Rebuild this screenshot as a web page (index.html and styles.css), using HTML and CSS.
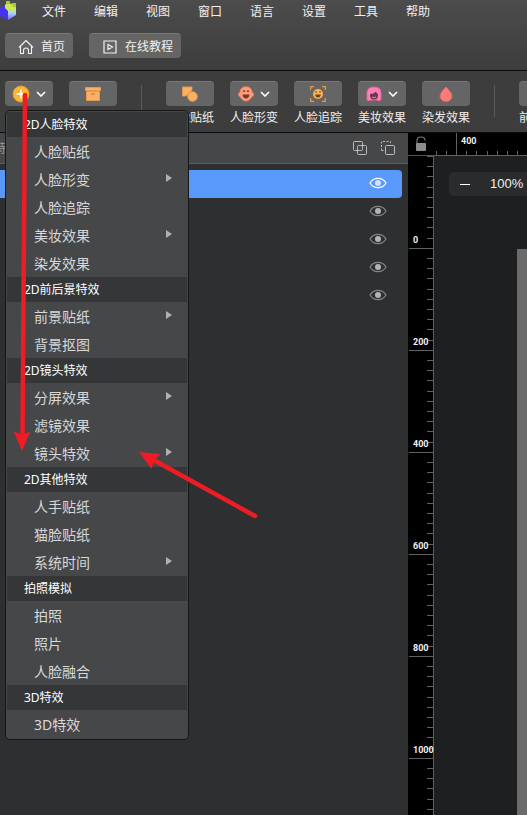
FILE: index.html
```html
<!DOCTYPE html>
<html lang="zh-CN">
<head>
<meta charset="utf-8">
<title>特效编辑器</title>
<link rel="stylesheet" href="styles.css">
</head>
<body>
<svg class="defs" aria-hidden="true">
  <symbol id="eye" viewBox="0 0 18 12"><path d="M1 6C4.500-.2 13.500-.2 17 6C13.500 12.200 4.500 12.200 1 6Z" fill="none" stroke="currentColor" stroke-width="1.200"/><circle class="iris" cx="9" cy="6" r="3"/></symbol>
  <symbol id="chev" viewBox="0 0 10 6"><path d="M1 1l4 4 4-4" fill="none" stroke="#fff" stroke-width="1.600"/></symbol>
  <symbol id="ticks" viewBox="0 0 25 102"><path d="M19 9.500h6M19 19.500h6M19 29.500h6M19 40.500h6M19 50.500h6M19 60.500h6M19 70.500h6M19 80.500h6M19 91.500h6M1 101.500h24" stroke="#606060"/></symbol>
</svg>
<div class="app">
  <header class="top">
    <nav class="menubar" aria-label="主菜单">
      <svg class="logo" viewBox="0 0 18 20"><path d="M0 6L5 5L8 9L16 5V14L8 19L0 15Z" fill="#4634f5"/><path d="M8 9L16 5V14L8 19Z" fill="url(#lg)"/><path d="M5 4L8 1L11 3L13 2L16 4V7L12 10L10 8L8 10L5 7Z" fill="#cfe84a"/><path d="M6 0h4v3H6ZM12 2h4v4h-3Z" fill="#a9c43a"/><defs><linearGradient id="lg" x1="0" y1="0" x2="0" y2="1"><stop offset="0" stop-color="#d3ef8a"/><stop offset=".5" stop-color="#b4d3e8"/><stop offset="1" stop-color="#6d6cff"/></linearGradient></defs></svg>
      <button>文件</button><button>编辑</button><button>视图</button><button>窗口</button><button>语言</button><button>设置</button><button>工具</button><button>帮助</button>
    </nav>
    <div class="quick">
      <button class="btn"><svg width="16" height="16" viewBox="0 0 16 16" fill="none" stroke="#f2f2f2" stroke-width="1.100"><path d="M1 8.500L8 1.500L15 8.500M2.500 7.500V14.500H5.500V11.500Q5.500 9 8 9T10.500 11.500V14.500H13.500V7.500" stroke-linejoin="round"/></svg>首页</button>
      <button class="btn"><svg width="14" height="14" viewBox="0 0 14 14" fill="none" stroke="#f2f2f2" stroke-width="1.200"><path d="M1 1h12v12H1ZM5 4.500v5L9.500 7Z"/></svg>在线教程</button>
    </div>
  </header>

  <div class="toolbar">
    <div class="tool"><button class="btn" aria-label="添加" aria-expanded="true"><svg width="18" height="18" viewBox="0 0 18 18"><circle cx="9" cy="9" r="8" fill="#f7b63c" stroke="#e59b25"/><path d="M9 4.500v9M4.500 9h9" stroke="#fff" stroke-width="1.500"/></svg><svg class="chev"><use href="#chev"/></svg></button></div>
    <div class="tool"><button class="btn" aria-label="素材"><svg width="16" height="16" viewBox="0 0 16 16" fill="#fbb06a" stroke="#e9994e"><path d="M.5 1.500h15v3H.5ZM1.500 5.500h13v9h-13Z"/><path d="M6 8h4" stroke="#d98332" stroke-width="1.500"/></svg></button></div>
    <hr>
    <div class="tool"><button class="btn" aria-label="人脸贴纸"><svg width="16" height="16" viewBox="0 0 16 16" fill="#fbb062" stroke="#e5974a"><path d="M.5 1h9.500v3L4 10H.5Z"/><circle cx="10.500" cy="10.500" r="4.800"/></svg></button><span>人脸贴纸</span></div>
    <div class="tool"><button class="btn" aria-label="人脸形变"><svg width="16" height="16" viewBox="0 0 16 16"><path d="M8 .8C12 .8 14 3.500 14 6.500C16 7 16 10 14 10.500C12.500 13.500 9.500 15 8 15S3.500 13.500 2 10.500C0 10 0 7 2 6.500C2 3.500 4 .8 8 .8Z" fill="#ff9b78" stroke="#f1815f"/><path d="M4.500 8.500h7Q11 12.500 8 12.500T4.500 8.500Z" fill="#703c32"/><path d="M5 5.500q1-1 2 0M9 5.500q1-1 2 0" fill="none" stroke="#703c32" stroke-width="1.200"/></svg><svg class="chev"><use href="#chev"/></svg></button><span>人脸形变</span></div>
    <div class="tool"><button class="btn" aria-label="人脸追踪"><svg width="16" height="16" viewBox="0 0 16 16"><path d="M.7 4V.7H4M12 .7h3.300V4M15.300 12v3.300H12M4 15.300H.7V12" fill="none" stroke="#f49a2f" stroke-width="1.200"/><circle cx="8" cy="8" r="5" fill="#ffb14f"/><path d="M5.200 8.500h5.600Q10.500 11.500 8 11.500T5.200 8.500Z" fill="#684321"/><circle cx="6" cy="6" r=".8" fill="#684321"/><circle cx="10" cy="6" r=".8" fill="#684321"/></svg></button><span>人脸追踪</span></div>
    <div class="tool"><button class="btn" aria-label="美妆效果"><svg width="16" height="16" viewBox="0 0 16 16"><path d="M1 14V7Q1 1 8 1T15 7V14Q12.500 15.500 11 14H5Q3 15.500 1 14Z" fill="#ff7fb8" stroke="#ed5f9f"/><path d="M4 8Q8 8 10 5.500Q10.500 7.500 12 8Q12.500 13.500 8 13.500T4 8Z" fill="#68394c"/><path d="M6 11q2 1.500 4 0" fill="none" stroke="#ff7fb8"/></svg><svg class="chev"><use href="#chev"/></svg></button><span>美妆效果</span></div>
    <div class="tool"><button class="btn" aria-label="染发效果"><svg width="14" height="16" viewBox="0 0 14 16"><path d="M7 1Q13 7 13 10A6 5.500 0 0 1 1 10Q1 7 7 1Z" fill="#ff7c7c" stroke="#ec6262"/></svg></button><span>染发效果</span></div>
    <hr>
    <div class="tool"><button class="btn" aria-label="前景贴纸"></button><span>前景贴纸</span></div>
  </div>

  <main class="work">
    <section class="panel">
      <div class="phead"><span>特效</span>
        <button aria-label="合并"><svg width="14" height="14" viewBox="0 0 14 14" fill="none" stroke="#bbb"><rect x=".5" y=".5" width="9" height="9" rx="1"/><rect x="4.500" y="4.500" width="9" height="9" rx="1"/></svg></button>
        <button aria-label="拆分"><svg width="14" height="14" viewBox="0 0 14 14" fill="none" stroke="#bbb"><path d="M.5 9.500V.5h9v2M.5 9.500h2" stroke-dasharray="2 1.500"/><rect x="4.500" y="4.500" width="9" height="9" rx="1"/></svg></button>
      </div>
      <ul class="layers">
        <li class="on"><button aria-label="显示"><svg class="eye"><use href="#eye"/></svg></button></li>
        <li><button aria-label="显示"><svg class="eye"><use href="#eye"/></svg></button></li>
        <li><button aria-label="显示"><svg class="eye"><use href="#eye"/></svg></button></li>
        <li><button aria-label="显示"><svg class="eye"><use href="#eye"/></svg></button></li>
        <li><button aria-label="显示"><svg class="eye"><use href="#eye"/></svg></button></li>
      </ul>
    </section>
    <section class="stage">
      <button class="lock" aria-label="锁定"><svg width="12" height="16" viewBox="0 0 12 16"><path d="M2 8V4.500Q2 1 6 1T10 4.500" fill="none" stroke="#777" stroke-width="1.200"/><rect x="1" y="7" width="10" height="8" rx="1" fill="#8c8c8c"/></svg></button>
      <div class="hruler"><span>400</span><svg width="102" height="23"><path d="M2.500 18v5M12.500 18v5M22.500 0v23M32.500 18v5M42.500 18v5M53.500 18v5M63.500 18v5M73.500 18v5M83.500 18v5M93.500 18v5" stroke="#606060"/></svg></div>
      <div class="vruler">
        <div><svg><use href="#ticks"/></svg><span>0</span></div>
        <div><svg><use href="#ticks"/></svg><span>200</span></div>
        <div><svg><use href="#ticks"/></svg><span>400</span></div>
        <div><svg><use href="#ticks"/></svg><span>600</span></div>
        <div><svg><use href="#ticks"/></svg><span>800</span></div>
        <div><svg><use href="#ticks"/></svg><span>1000</span></div>
        <div><svg><use href="#ticks"/></svg></div>
      </div>
      <div class="canvas">
        <div class="zoom"><button aria-label="缩小"></button><span>100%</span></div>
        <div class="artboard"></div>
      </div>
    </section>
  </main>

  <div class="menu">
    <h2>2D人脸特效</h2>
    <button>人脸贴纸</button><button class="sub">人脸形变</button><button>人脸追踪</button><button class="sub">美妆效果</button><button>染发效果</button>
    <h2>2D前后景特效</h2>
    <button class="sub">前景贴纸</button><button>背景抠图</button>
    <h2>2D镜头特效</h2>
    <button class="sub">分屏效果</button><button>滤镜效果</button><button class="sub">镜头特效</button>
    <h2>2D其他特效</h2>
    <button>人手贴纸</button><button>猫脸贴纸</button><button class="sub">系统时间</button>
    <h2>拍照模拟</h2>
    <button>拍照</button><button>照片</button><button>人脸融合</button>
    <h2>3D特效</h2>
    <button>3D特效</button>
  </div>

  <svg class="marks" width="270" height="530" fill="#ee1c24" stroke="#ee1c24" aria-hidden="true">
    <path d="M25 95L22.500 438M255 516L150 458" stroke-width="4.500" stroke-linecap="round"/>
    <path stroke="none" d="M22 451L13.500 431L22 435L30.500 431.500ZM139 452L160.500 454L154.500 460L151.500 469Z"/>
  </svg>
</div>
</body>
</html>
```
FILE: styles.css
```css
* { box-sizing: border-box; }
body {
  margin: 0;
  background: #2e2f31;
  color: #f0f0f0;
  font: 12px/16px "Noto Sans", "Noto Sans CJK SC", sans-serif;
}
button {
  margin: 0;
  padding: 0;
  border: 0;
  background: none;
  color: inherit;
  font: inherit;
}
svg { flex: none; }
.defs { position: absolute; width: 0; height: 0; }

.app {
  position: relative;
  display: flex;
  flex-direction: column;
  height: 100vh;
  overflow: hidden;
}

.top {
  height: 71px;
  flex: none;
  background: linear-gradient(#4c4c4c, #3d3d3d);
  border-bottom: 1px solid #0c0c0c;
}
.menubar {
  display: flex;
  align-items: center;
  gap: 28px;
  height: 22px;
}
.menubar button { padding-top: 2px; }
.logo { width: 18px; height: 20px; margin-right: -4px; }
.quick {
  display: flex;
  gap: 16px;
  padding: 11px 5px 0;
}
.btn {
  display: flex;
  align-items: center;
  justify-content: center;
  gap: 8px;
  height: 25px;
  border-radius: 4px;
  background: #656565;
  border-top: 1px solid #777;
}
.quick .btn { padding: 1px 8px 0 14px; }
.quick .btn:first-child { padding-left: 13px; gap: 7px; }

.toolbar {
  display: flex;
  flex: none;
  gap: 16px;
  height: 62px;
  padding: 10px 5px 0;
  background: #3d3d3d;
  border-bottom: 1px solid #0c0c0c;
}
.tool {
  flex: none;
  width: 48px;
  display: flex;
  flex-direction: column;
  gap: 4px;
  white-space: nowrap;
}
.tool .btn { width: 48px; gap: 6px; }
.chev { width: 10px; height: 6px; }
.toolbar hr {
  flex: none;
  width: 1px;
  height: 32px;
  margin: 4px 8px 0;
  border: 0;
  background: #5a5a5a;
}

.work {
  flex: 1;
  min-height: 0;
  display: grid;
  grid-template-columns: 408px 1fr;
}
.phead {
  display: flex;
  align-items: center;
  gap: 14px;
  height: 31px;
  padding-right: 13px;
  background: #464749;
  border-bottom: 1px solid #5d5d5d;
  color: #999;
}
.phead span { flex: 1; padding-top: 2px; margin-left: -6px; }
.phead button { height: 14px; }
.layers {
  margin: 6px 6px 0 0;
  padding: 0;
  list-style: none;
}
.layers li {
  display: flex;
  align-items: center;
  justify-content: flex-end;
  height: 28px;
  padding: 0 15px 2px 0;
  color: #858585;
}
.layers button { height: 12px; }
.eye { display: block; width: 18px; height: 12px; fill: #b4b4b4; }
.layers .on {
  border-radius: 0 4px 4px 0;
  background: #5a99fc;
  color: #fff;
}
.on .eye { fill: #d2e2ff; }

.stage {
  min-width: 0;
  min-height: 0;
  overflow: hidden;
  display: grid;
  grid-template-columns: 26px 1fr;
  grid-template-rows: 23px 1fr;
  background: #000;
}
.lock {
  display: grid;
  place-items: center;
  border-bottom: 1px solid #505050;
}
.hruler {
  position: relative;
  overflow: hidden;
  border-bottom: 1px solid #606060;
}
.hruler span {
  position: absolute;
  left: 27px;
  top: 2px;
}
.hruler span, .vruler span {
  font: bold 9px/12px Roboto, sans-serif;
}
.vruler {
  min-height: 0;
  display: flex;
  flex-direction: column;
  border-right: 1px solid #606060;
}
.vruler div {
  position: relative;
  flex: none;
  height: 102px;
}
.vruler div:first-child { margin-top: -9px; }
.vruler svg { display: block; width: 25px; height: 102px; }
.vruler span {
  position: absolute;
  left: 5px;
  bottom: 3px;
}
.canvas {
  min-width: 0;
  display: flex;
  flex-direction: column;
  background: #1e1f21;
}
.zoom {
  flex: none;
  display: flex;
  align-items: center;
  gap: 20px;
  height: 24px;
  margin: 16px 0 53px 15px;
  padding-left: 11px;
  border-radius: 4px 0 0 4px;
  background: #2a2b2d;
  font-family: "Liberation Sans", sans-serif;
  font-size: 13px;
}
.zoom button { width: 10px; height: 1px; background: #fff; }
.artboard {
  flex: 1;
  margin-left: 83px;
  background: #6b6b6b;
}

.menu {
  position: absolute;
  left: 5px;
  top: 110px;
  width: 184px;
  padding: 1px;
  border: 1px solid #161616;
  border-radius: 5px;
  background: #464749;
}
.menu h2 {
  height: 25px;
  margin: 0;
  padding-left: 17px;
  background: #353638;
  color: #fff;
  font-size: 12px;
  font-weight: 400;
  line-height: 26px;
}
.menu button {
  display: flex;
  align-items: center;
  justify-content: space-between;
  width: 100%;
  height: 28px;
  padding: 2px 15px 0 27px;
  color: #d8d8d8;
  font-size: 14px;
}
.sub::after {
  content: "";
  margin-bottom: 4px;
  border: solid transparent;
  border-width: 4px 0 4px 6px;
  border-left-color: #b0b0b0;
}
.marks {
  position: absolute;
  left: 0;
  top: 0;
  pointer-events: none;
}
```
